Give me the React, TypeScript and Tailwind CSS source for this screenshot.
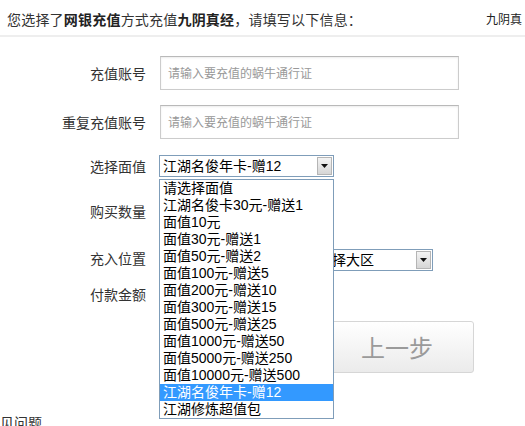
import React from "react";

const options = [
  "请选择面值",
  "江湖名俊卡30元-赠送1",
  "面值10元",
  "面值30元-赠送1",
  "面值50元-赠送2",
  "面值100元-赠送5",
  "面值200元-赠送10",
  "面值300元-赠送15",
  "面值500元-赠送25",
  "面值1000元-赠送50",
  "面值5000元-赠送250",
  "面值10000元-赠送500",
  "江湖名俊年卡-赠12",
  "江湖修炼超值包",
];

function Arrow() {
  return (
    <div className="w-[15px] h-[18px] shrink-0 border border-[#b5b5b5] bg-gradient-to-b from-[#f4f4f4] to-[#d6d6d6] flex items-center justify-center">
      <svg width="7" height="4" viewBox="0 0 7 4">
        <path d="M0 0H7L3.5 4Z" fill="#111" />
      </svg>
    </div>
  );
}

function FakeSelect({ text, className }: { text: string; className: string }) {
  return (
    <div
      className={
        "h-[22px] border border-[#7f9db9] bg-white flex items-center pl-[3px] pr-[1px] font-['Liberation_Sans','Noto_Sans_CJK_SC',sans-serif] text-[14px] leading-[16px] text-black " +
        className
      }
    >
      <span className="flex-1 whitespace-nowrap overflow-hidden">{text}</span>
      <Arrow />
    </div>
  );
}

function Label({ children, className = "" }: { children: React.ReactNode; className?: string }) {
  return (
    <div className={"w-[146px] shrink-0 text-right text-[14px] text-[#333] mr-[14px] " + className}>
      {children}
    </div>
  );
}

export default function App() {
  return (
    <div className="w-[525px] h-[426px] overflow-hidden bg-white relative font-['Noto_Sans_CJK_SC',sans-serif] text-[#333]">
      <div className="flex items-center h-[37px] pt-[3px] border-b-2 border-[#eeeeee] whitespace-nowrap">
        <div className="pl-[7px] w-[486px] shrink-0 text-[14px] tracking-[0.2px]">
          您选择了<b className="font-bold text-[#222]">网银充值</b>方式充值<b className="font-bold text-[#222]">九阴真经</b>，请填写以下信息：
        </div>
        <div className="text-[12px] text-[#222]">九阴真</div>
      </div>

      <div className="flex items-center mt-[19px] h-[34px]">
        <Label>充值账号</Label>
        <div className="w-[299px] h-[34px] border border-[#cccccc] border-t-[#b9b9b9] shadow-[inset_0_1px_2px_rgba(0,0,0,0.08)] flex items-center pl-[7px] text-[12px] text-[#999]">
          请输入要充值的蜗牛通行证
        </div>
      </div>

      <div className="flex items-center mt-[15px] h-[34px]">
        <Label>重复充值账号</Label>
        <div className="w-[299px] h-[34px] border border-[#cccccc] border-t-[#b9b9b9] shadow-[inset_0_1px_2px_rgba(0,0,0,0.08)] flex items-center pl-[7px] text-[12px] text-[#999]">
          请输入要充值的蜗牛通行证
        </div>
      </div>

      <div className="flex items-center mt-[16px] h-[22px]">
        <Label className="!mr-[13px]">选择面值</Label>
        <FakeSelect text="江湖名俊年卡-赠12" className="w-[175px]" />
      </div>

      <div className="flex items-center mt-[17px] h-[34px]">
        <Label>购买数量</Label>
        <div className="w-[80px] h-[30px] border border-[#cccccc]" />
      </div>

      <div className="flex items-center mt-[21px] h-[22px]">
        <Label className="-mt-[4px]">充入位置</Label>
        <FakeSelect text="" className="w-[135px]" />
        <FakeSelect text="请选择大区" className="w-[133px] ml-[5px]" />
      </div>

      <div className="flex items-center mt-[12px] h-[22px]">
        <Label>付款金额</Label>
      </div>

      <div className="flex mt-[16px]">
        <div className="ml-[320px] w-[154px] h-[52px] border border-[#d6d6d6] rounded-[3px] bg-gradient-to-b from-[#ffffff] to-[#ebebeb] flex items-center justify-center text-[24px] text-[#9a9a9a]">
          上一步
        </div>
      </div>

      <div className="mt-[39px] -ml-[14px] text-[14px] leading-[20px] text-[#333] whitespace-nowrap">常见问题</div>

      <div className="absolute left-[159px] top-[179px] w-[175px] border border-[#7f9db9] bg-white font-['Liberation_Sans','Noto_Sans_CJK_SC',sans-serif] text-[14px] text-black">
        {options.map((o, i) => (
          <div
            key={o}
            className={
              "h-[17px] leading-[17px] pl-[3px] whitespace-nowrap " +
              (i === 12 ? "bg-[#3399ff] text-white" : "")
            }
          >
            {o}
          </div>
        ))}
      </div>
    </div>
  );
}
